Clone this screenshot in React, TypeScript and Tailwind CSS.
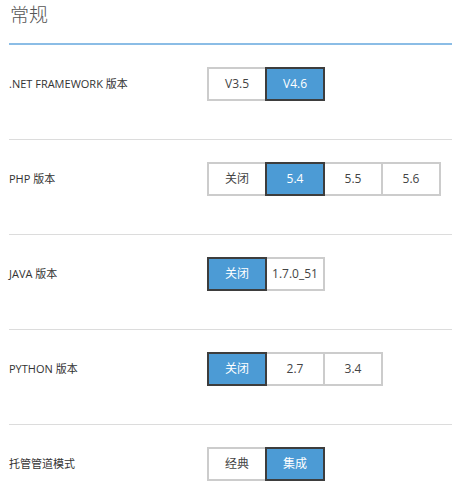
const rows = [
  { label: '.NET FRAMEWORK 版本', options: ['V3.5', 'V4.6'], selected: 1 },
  { label: 'PHP 版本', options: ['关闭', '5.4', '5.5', '5.6'], selected: 1 },
  { label: 'JAVA 版本', options: ['关闭', '1.7.0_51'], selected: 0 },
  { label: 'PYTHON 版本', options: ['关闭', '2.7', '3.4'], selected: 0 },
  { label: '托管管道模式', options: ['经典', '集成'], selected: 1 }
]

const font = { fontFamily: '"Open Sans", "Noto Sans CJK SC", sans-serif' }

const App = () => {
  return (
    <div className="w-[452px] h-[488px] bg-white pl-[9px] overflow-hidden" style={font}>
      <div className="h-[43px] pt-[3px] pl-[1px] text-[19px] leading-[24px] text-[#555] font-light">常规</div>
      <div className="h-[2px] bg-[#8bbde6]" />
      {rows.map((row, i) => (
        <div key={i} className={`flex items-center pt-[22px] pb-[38px] ${i < rows.length - 1 ? 'border-b border-[#dcdcdc]' : ''}`}>
          <div className="w-[198px] text-[11px] text-[#333]">{row.label}</div>
          <div className="flex">
            {row.options.map((opt, j) => (
              <div
                key={j}
                className={
                  j === row.selected
                    ? 'relative z-10 w-[60px] h-[34px] flex items-center justify-center border-2 border-[#3d3d3d] bg-[#4c9bd5] text-white text-[12px] -ml-[2px] first:ml-0'
                    : 'w-[60px] h-[34px] flex items-center justify-center border-2 border-[#cccccc] bg-white text-[#444] text-[12px] -ml-[2px] first:ml-0'
                }
              >
                {opt}
              </div>
            ))}
          </div>
        </div>
      ))}
    </div>
  )
}

export default App
